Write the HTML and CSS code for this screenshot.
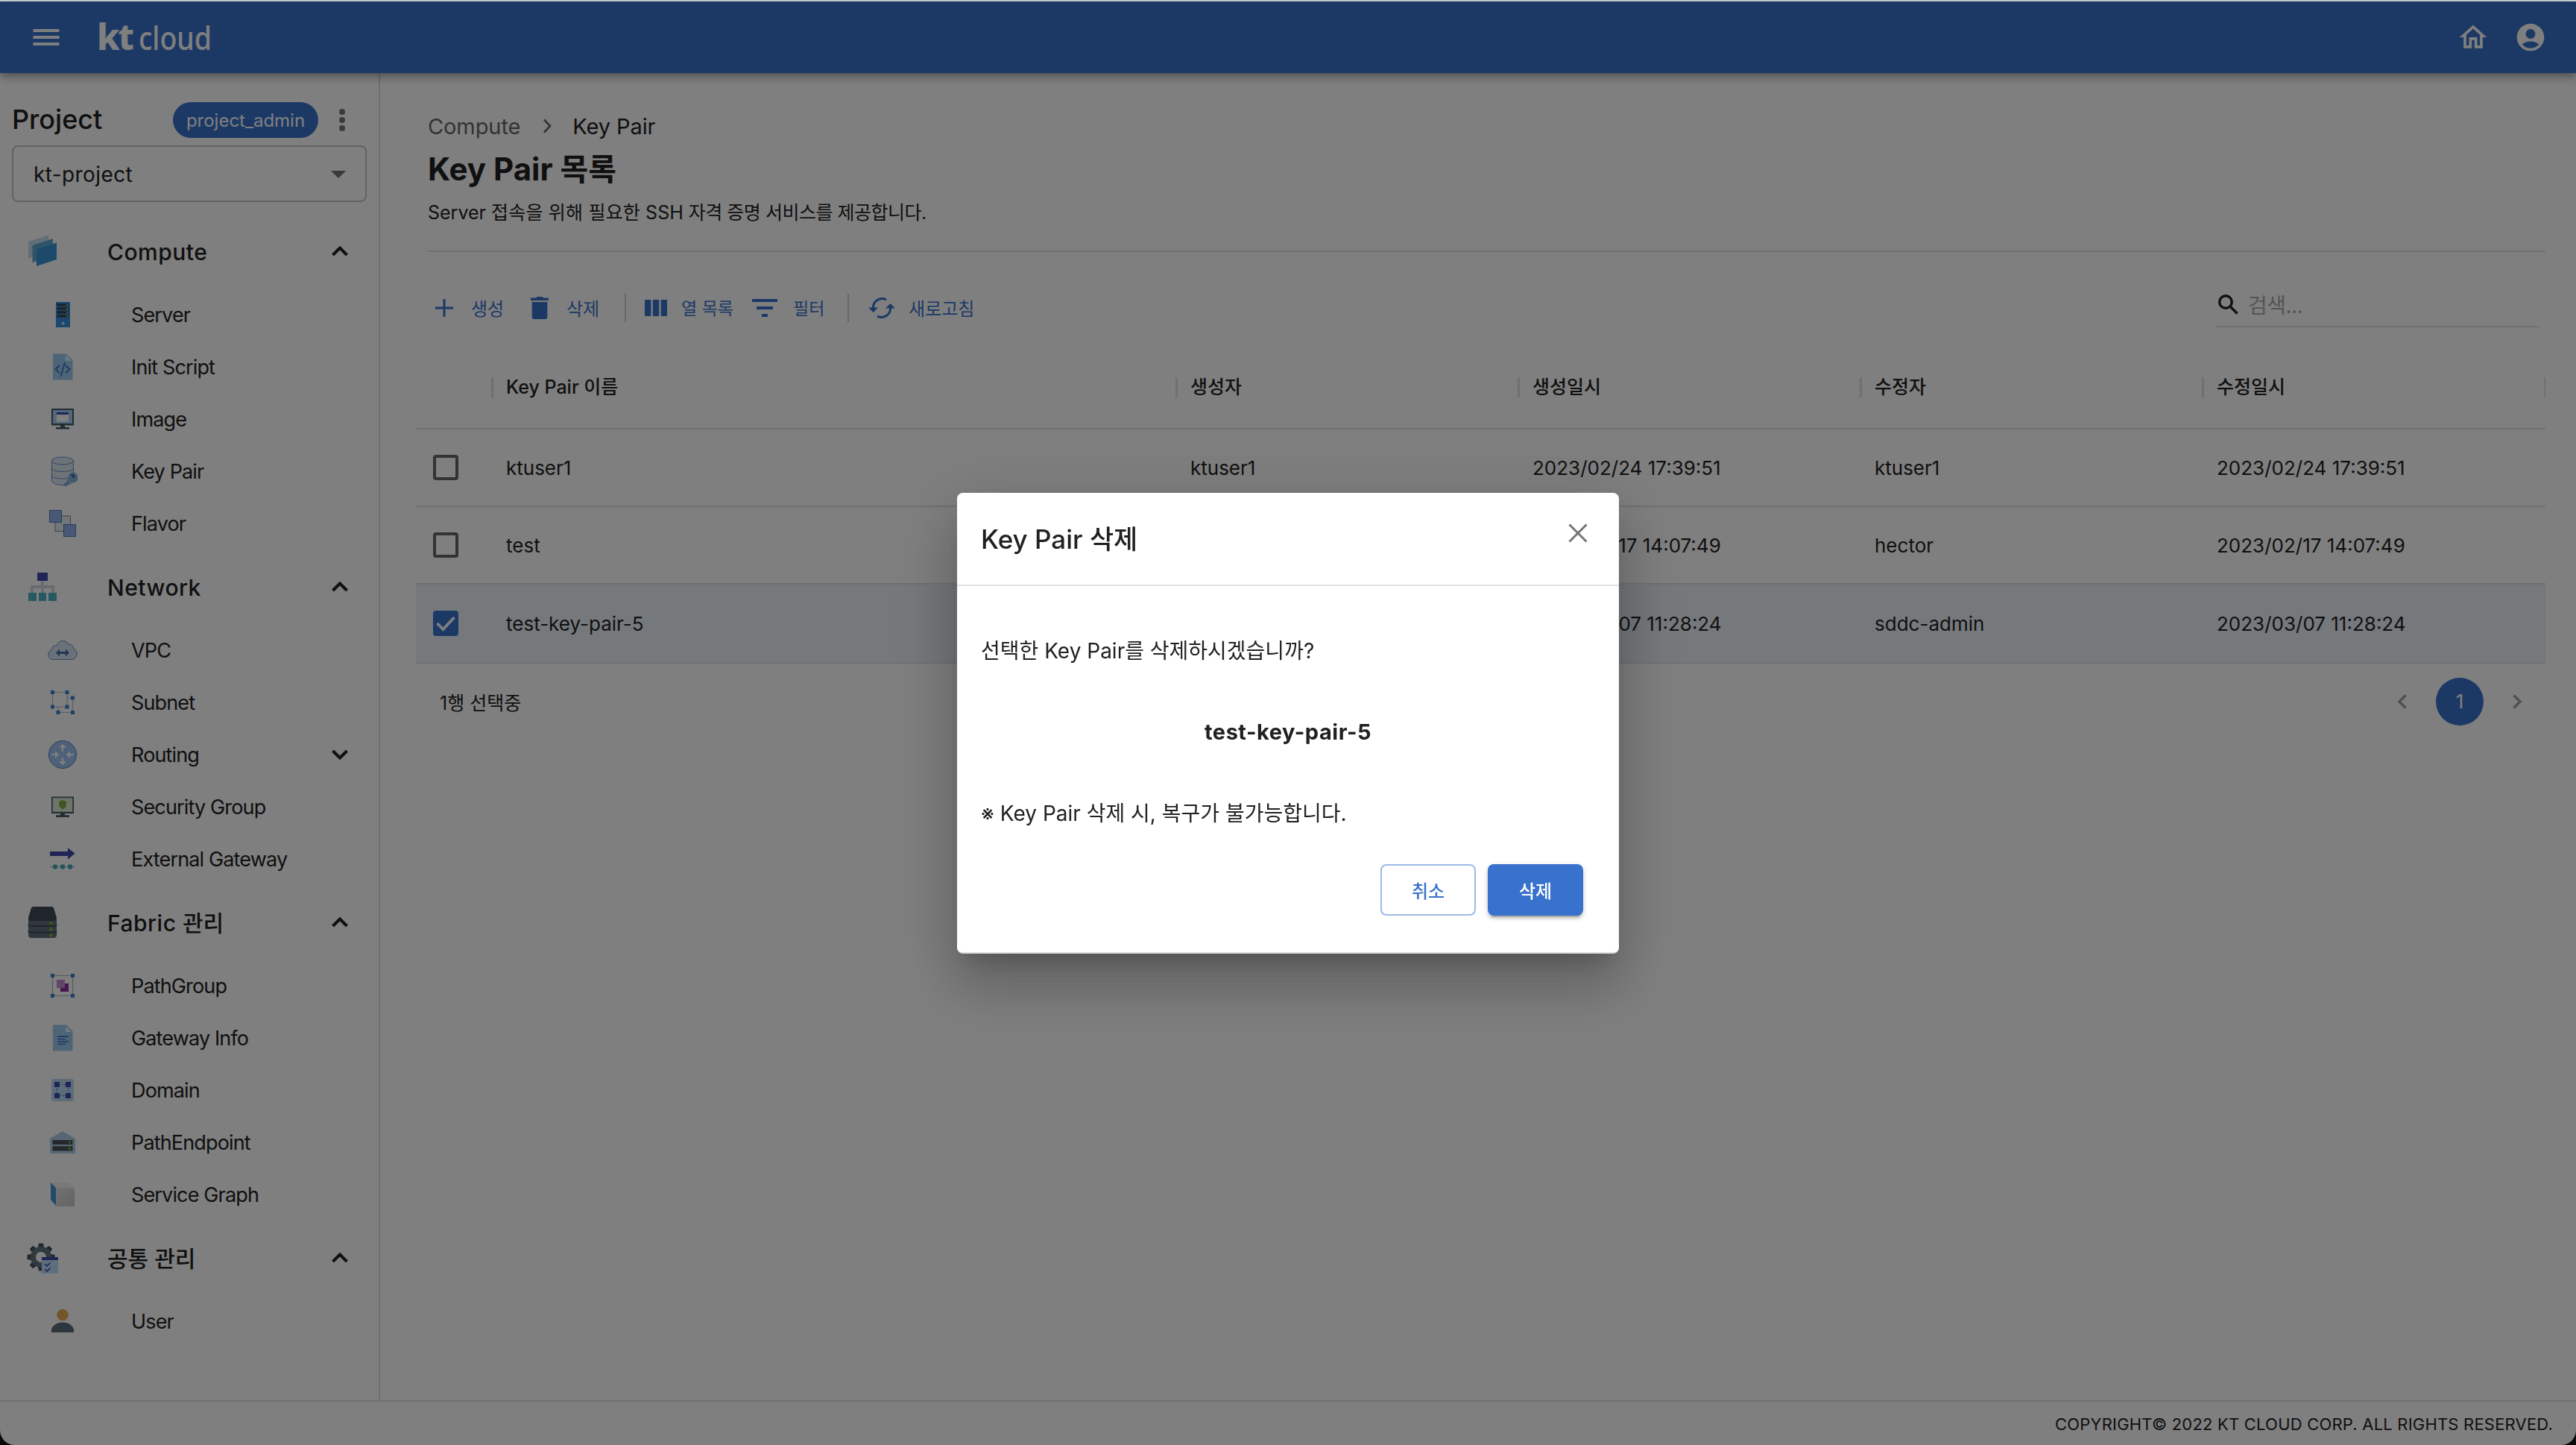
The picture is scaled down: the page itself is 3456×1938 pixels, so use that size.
FILE: index.html
```html
<!DOCTYPE html>
<html lang="ko">
<head>
<meta charset="utf-8">
<title>Key Pair 목록 - kt cloud</title>
<link rel="stylesheet" href="styles.css">
</head>
<body>
<div class="window">
  <div class="strip"></div>
  <header class="appbar">
    <svg class="menu-icon" viewBox="0 0 36 24"><path d="M0.5 1h35v4h-35zM0.5 10h35v4h-35zM0.5 19h35v4h-35z"/></svg>
    <div class="logo"><span class="logo-kt">kt</span><span class="logo-cloud">cloud</span></div>
    <div class="appbar-actions">
      <svg class="home-icon" viewBox="0 0 24 24"><path d="m12 5.69 5 4.5V18h-2v-6H9v6H7v-7.810l5-4.5M12 3 2 12h3v8h6v-6h2v6h6v-8h3L12 3z"/></svg>
      <svg class="account-icon" viewBox="0 0 24 24"><path d="M12 2C6.480 2 2 6.480 2 12s4.480 10 10 10 10-4.480 10-10S17.520 2 12 2zm0 4c1.930 0 3.500 1.570 3.500 3.500S13.930 13 12 13s-3.500-1.570-3.500-3.500S10.070 6 12 6zm0 14c-2.030 0-4.430-.82-6.140-2.880C7.550 15.800 9.680 15 12 15s4.450.8 6.140 2.120C16.430 19.180 14.030 20 12 20z"/></svg>
    </div>
  </header>

  <div class="body">
    <nav class="sidebar">
      <div class="project-row">
        <span class="project-label">Project</span>
        <span class="chip">project_admin</span>
        <svg class="dots" viewBox="0 0 10 32"><circle cx="5" cy="5" r="4"/><circle cx="5" cy="16" r="4"/><circle cx="5" cy="27" r="4"/></svg>
      </div>
      <div class="select"><span>kt-project</span><svg viewBox="0 0 20 10"><path d="M0 0h20L10 10z"/></svg></div>

      <div class="group">
        <svg class="group-icon" viewBox="0 0 44 44"><path fill="#a5d0e2" opacity=".7" d="M3 9 30 .5V23L3 32z"/><path fill="#5fa9cf" d="M8.500 14 36 5v23L8.500 37z"/><path fill="#3b92d4" d="M14 19.500 41 10.500V33L14 42z"/></svg>
        <span class="group-title">Compute</span>
        <svg class="chev" viewBox="0 0 24 16"><path d="M2.500 13 12 3.500 21.500 13"/></svg>
      </div>
      <div class="item"><svg class="item-icon" viewBox="0 0 40 40"><path fill="#3b8fe0" d="M11 3h19v34H11z"/><path fill="#37474f" d="M12.500 5.200h15.500v3.300H12.500zM12.500 10.200h15.500v3.300H12.500zM12.500 15.200h15.500v3.300H12.500zM12.500 20.200h15.500v3.300H12.500z"/><path fill="#8bc34a" d="M25 6h2v2h-2zM25 11h2v2h-2zM25 16h2v2h-2zM25 21h2v2h-2z"/><circle cx="20.600" cy="31.700" r="2" fill="#bbdefb"/></svg><span>Server</span></div>
      <div class="item"><svg class="item-icon" viewBox="0 0 40 40"><path fill="#9cc8ef" d="M7 2.500h18L33.500 11v26.500H7z"/><path fill="#e1f5fe" d="M24 4v8h8z"/><path fill="none" stroke="#2f6fc4" stroke-width="1.700" d="m16 18-5.500 5 5.500 5.500M23 14l-5.500 19M24 18l5.500 5-5.500 5.500"/></svg><span>Init Script</span></div>
      <div class="item"><svg class="item-icon" viewBox="0 0 40 40"><path fill="#455a64" d="M5 6h30v22.500H5zM17 28h6v4h-6zM11 31h18v2.600H11z"/><path fill="#a6d0fa" d="M7 8h26v18H7z"/><path fill="#fff" d="M12 11h16v12.500H12z"/><path fill="#3f47b0" d="M12 11h16v3H12z"/></svg><span>Image</span></div>
      <div class="item"><svg class="item-icon" viewBox="0 0 40 40"><g fill="#dde6ee" stroke="#5f8fc8"><path d="M5.500 6v26c0 4 6 6.500 14.500 6.500S34.500 36 34.500 32V6"/><ellipse cx="20" cy="6" rx="14.500" ry="5"/><path fill="none" d="M5.500 15.500c0 3.500 6.500 5 14.500 5s14.500-1.500 14.500-5M5.500 25c0 3.500 6.500 5 14.500 5 3 0 6 0 8-.6"/><path fill="#8db4e6" d="m28.800 31-6.300 6.200c-.6 2 1 3 2.700 2.300l1-2.300 2-.6.400-2 2.200-1.200a6 6 0 1 0-2-2.400z"/></g><ellipse cx="34" cy="26.500" rx="2" ry="3.200" fill="#3f6cae" transform="rotate(-40 34 26.500)"/></svg><span>Key Pair</span></div>
      <div class="item"><svg class="item-icon" viewBox="0 0 40 40"><path fill="#e3edf2" stroke="#7b8690" d="M10 10h20.500v20.500H10z"/><path fill="#90b0ea" stroke="#5074b8" d="M2.500 2.500h16v16h-16zM21.500 21.500h16v16h-16z"/></svg><span>Flavor</span></div>

      <div class="group">
        <svg class="group-icon" viewBox="0 0 44 44"><path fill="#cfd8dc" d="M20 14h4v6h14v10h-4v-6H24v6h-4v-6H10v6H6V20h14z"/><path fill="#4048ac" d="M15 3h14v11H15z"/><path fill="#4fb3c8" d="M3 30h11v11H3zM17 30h10v11H17zM30 30h11v11H30z"/></svg>
        <span class="group-title">Network</span>
        <svg class="chev" viewBox="0 0 24 16"><path d="M2.500 13 12 3.500 21.500 13"/></svg>
      </div>
      <div class="item"><svg class="item-icon" viewBox="0 0 40 40"><path fill="#d5e3f5" stroke="#5f8fc8" d="M7 32.500a6.500 6.500 0 0 1-2-12.500c0-4 3-6.500 7-6 1.500-4 4.500-6.500 8-6.500s6.500 1.500 7.500 4.500c5 0 7.500 3 7.500 6.500a7.500 7.500 0 0 1-2 14z"/><path fill="#456da8" d="m11 23.500 5-5v3.500h8v-3.500l5 5-5 5V25h-8v3.500z"/></svg><span>VPC</span></div>
      <div class="item"><svg class="item-icon" viewBox="0 0 40 40"><path fill="none" stroke="#b0bec5" stroke-width="1.200" d="M6.500 6.500H26V26H6.500zM26 14h7.500v19.500H14V26"/><path fill="#3b82d0" d="M4 4h5v5H4zM23.500 4h5v5h-5zM31 11.500h5v5h-5zM4 23.500h5v5H4zM23.500 23.500h5v5h-5zM11.500 31h5v5h-5zM31 31h5v5h-5z"/></svg><span>Subnet</span></div>
      <div class="item"><svg class="item-icon" viewBox="0 0 40 40"><circle cx="20" cy="20" r="18.500" fill="#9dc3f2" stroke="#4f80c8"/><path fill="#fff" d="m20 6 5 5h-4v5h-2v-5h-4zM20 34l5-5h-4v-5h-2v5h-4zM15 20l-5-5v4H5v2h5v4zM25 20l5-5v4h5v2h-5v4z"/></svg><span>Routing</span><svg class="chev" viewBox="0 0 24 16"><path d="M2.500 3 12 12.500 21.500 3"/></svg></div>
      <div class="item"><svg class="item-icon" viewBox="0 0 40 40"><path fill="#455a64" d="M5 6.500h30V29H5zM17 29h6v3h-6zM11 31.200h18V34H11z"/><path fill="#dfe8d5" d="M6.700 8.200h26.600v18.600H6.700z"/><path fill="#80b040" d="m20 11 5 2v4c0 3-2 5-5 6.500-3-1.500-5-3.500-5-6.500v-4z"/></svg><span>Security Group</span></div>
      <div class="item"><svg class="item-icon" viewBox="0 0 40 40"><path fill="#4048ac" d="M3 10h24V5l9.500 7.700L27 20.500V16H3z"/><path stroke="#b0bec5" stroke-width="1.200" d="M3 30.500h34"/><g fill="#4aa8ba"><circle cx="10" cy="30.500" r="3.300"/><circle cx="20" cy="30.500" r="3.300"/><circle cx="30" cy="30.500" r="3.300"/></g></svg><span>External Gateway</span></div>

      <div class="group">
        <svg class="group-icon" viewBox="0 0 44 44"><path fill="#62717b" d="M3 18h38v21a4 4 0 0 1-4 4H7a4 4 0 0 1-4-4z"/><path fill="#3e4a54" d="M10 1h24q3 0 3.500 3L41 16q0 4-3 4H6q-3 0-3-4L6.500 4Q7 1 10 1z"/><path fill="none" stroke="#3e4a54" stroke-width="2" d="M3 25q1 2 3 2h32q2 0 3-2M3 33.500q1 2 3 2h32q2 0 3-2"/><g fill="#76b233"><circle cx="33.500" cy="23" r="2.200"/><circle cx="33.500" cy="31.300" r="2.200"/><circle cx="33.500" cy="39.700" r="2.200"/></g></svg>
        <span class="group-title">Fabric <span class="ko">관리</span></span>
        <svg class="chev" viewBox="0 0 24 16"><path d="M2.500 13 12 3.500 21.500 13"/></svg>
      </div>
      <div class="item"><svg class="item-icon" viewBox="0 0 40 40"><path fill="none" stroke="#a3b2b8" stroke-width="1.200" d="M6.500 6.500h27v27h-27z"/><path fill="#3b82d0" d="M4 4h5v5H4zM31 4h5v5h-5zM4 31h5v5H4zM31 31h5v5h-5z"/><path fill="#8a2a9c" d="M17 17h11v11H17z"/><path fill="#c08fd2" d="M12 12h11v11H12z"/></svg><span>PathGroup</span></div>
      <div class="item"><svg class="item-icon" viewBox="0 0 40 40"><path fill="#9cc8ef" d="M7 2.500h18L33.500 11v26.500H7z"/><path fill="#e1f5fe" d="M24 4v8h8z"/><path fill="none" stroke="#2f6fc4" stroke-width="1.400" d="M13 18.300h15M13 21.600h11M13 25h15M13 28.400h11"/></svg><span>Gateway Info</span></div>
      <div class="item"><svg class="item-icon" viewBox="0 0 40 40"><rect x="5" y="5" width="30" height="30" rx="3" fill="#bbd9f2"/><path fill="none" stroke="#3b82d0" stroke-width="1.200" stroke-dasharray="4 1.500 1.500 1.500" d="M12.500 12.500h15v15h-15z"/><path fill="#4048ac" d="M9 9h7v7H9zM24 9h7v7h-7zM9 24h7v7H9zM24 24h7v7h-7z"/></svg><span>Domain</span></div>
      <div class="item"><svg class="item-icon" viewBox="0 0 40 40"><path fill="#b0cde8" d="M3 15 20 5l17 10v20H3z"/><path fill="#455058" d="M6.500 17h27v6h-27zM6.500 25.300h27v6.200h-27z"/><circle cx="29.300" cy="20" r="1.800" fill="#76b233"/><circle cx="29.300" cy="28.400" r="1.800" fill="#76b233"/></svg><span>PathEndpoint</span></div>
      <div class="item"><svg class="item-icon" viewBox="0 0 40 40"><defs><linearGradient id="cube" x1="0" y1="0" x2="1" y2="1"><stop offset="0" stop-color="#e4e4e6"/><stop offset="1" stop-color="#c8c8cc"/></linearGradient></defs><path fill="#f0f0f0" d="M4 4h24l8 7H11z"/><path fill="#4296d0" d="m4 4 7 7v24l-7-8z"/><path fill="url(#cube)" d="M11 11h25v25H11z"/></svg><span>Service Graph</span></div>

      <div class="group">
        <svg class="group-icon" viewBox="0 0 44 44"><g fill="#46545e"><path id="tooth" d="M17 2.500h6l1.500 7h-9zM17 39.500h6l1.500-7h-9z"/><use href="#tooth" transform="rotate(45 20 21)"/><use href="#tooth" transform="rotate(90 20 21)"/><use href="#tooth" transform="rotate(135 20 21)"/></g><circle cx="20" cy="21" r="10.500" fill="none" stroke="#607580" stroke-width="7"/><path fill="#bbdefb" d="M21 21h22v22H21z"/><path fill="#4048ac" d="M21 21h22v4H21z"/><path fill="none" stroke="#4048ac" stroke-width="1.700" d="m25 30 3 3 4.500-4.500M25 37l3 3 4.500-4.500"/></svg>
        <span class="group-title ko">공통 관리</span>
        <svg class="chev" viewBox="0 0 24 16"><path d="M2.500 13 12 3.500 21.500 13"/></svg>
      </div>
      <div class="item"><svg class="item-icon" viewBox="0 0 40 40"><circle cx="20" cy="11.500" r="7.800" fill="#e8ac58"/><path fill="#5a6d78" d="M5 35v-4c1-5 7.500-9.500 15-9.500S34 26 35 31v4z"/></svg><span>User</span></div>
    </nav>

    <main class="main">
      <div class="breadcrumb"><span class="crumb-parent">Compute</span><svg viewBox="0 0 12 20"><path d="M2 1.500 10 10l-8 8.500"/></svg><span>Key Pair</span></div>
      <h1 class="title">Key Pair <span class="ko">목록</span></h1>
      <p class="desc">Server <span class="desc-a">접속을 위해 필요한</span> SSH <span class="desc-b">자격 증명 서비스를 제공합니다.</span></p>
      <div class="grid">
        <div class="toolbar">
          <div class="tool t-add"><svg viewBox="0 0 24 24"><path d="M10.500 0h3v10.500H24v3H13.500V24h-3V13.500H0v-3h10.500z"/></svg><span>생성</span></div>
          <div class="tool t-del"><svg viewBox="0 0 24 30"><path d="M7 1.500 8.500 0h7L17 1.500h7V5H0V1.500zM1.700 7h20.600v20a3 3 0 0 1-3 3H4.700a3 3 0 0 1-3-3z"/></svg><span>삭제</span></div>
          <i class="bar"></i>
          <div class="tool t-cols"><svg viewBox="0 0 30 22"><rect width="8.400" height="22" rx="1.200"/><rect x="10.800" width="8.400" height="22" rx="1.200"/><rect x="21.600" width="8.400" height="22" rx="1.200"/></svg><span>열 목록</span></div>
          <div class="tool t-filter"><svg viewBox="0 0 34 24"><path d="M0 0h34v4H0zM6 10h22v4H6zM13 20h8v4h-8z"/></svg><span>필터</span></div>
          <i class="bar"></i>
          <div class="tool t-refresh"><svg viewBox="0 0 36 28"><path fill="none" stroke="currentColor" stroke-width="3" d="M24 3A12 12 0 0 0 6.500 15M12 25A12 12 0 0 0 29.500 13"/><path d="M0 13.500h13L6.500 20zM36 14.500H23L29.500 8z"/></svg><span>새로고침</span></div>
          <div class="search"><svg viewBox="0 0 27 27"><circle cx="10" cy="10" r="8.300"/><path d="m16 16 9.500 9.500"/></svg><span>검색...</span></div>
        </div>
        <div class="row head"><span class="c0"></span><span class="c1">Key Pair <span class="ko">이름</span></span><span class="c ko">생성자</span><span class="c ko">생성일시</span><span class="c ko">수정자</span><span class="c ko">수정일시</span><span class="end"></span></div>
        <div class="row"><span class="c0"><i class="box"></i></span><span class="c1">ktuser1</span><span class="c">ktuser1</span><span class="c">2023/02/24 17:39:51</span><span class="c">ktuser1</span><span class="c">2023/02/24 17:39:51</span></div>
        <div class="row"><span class="c0"><i class="box"></i></span><span class="c1">test</span><span class="c">hector</span><span class="c">2023/02/17 14:07:49</span><span class="c">hector</span><span class="c">2023/02/17 14:07:49</span></div>
        <div class="row selected"><span class="c0"><i class="box checked"><svg viewBox="0 0 34 34"><path d="m5.500 17 8 8 15-16"/></svg></i></span><span class="c1">test-key-pair-5</span><span class="c">sddc-admin</span><span class="c">2023/03/07 11:28:24</span><span class="c">sddc-admin</span><span class="c">2023/03/07 11:28:24</span></div>
        <div class="grid-foot"><span class="count">1<span class="ko">행 선택중</span></span>
          <div class="pager"><svg viewBox="0 0 14 20"><path d="M11.500 1.500 3 10l8.500 8.500"/></svg><span class="page">1</span><svg viewBox="0 0 14 20"><path d="M2.500 1.500 11 10l-8.500 8.500"/></svg></div>
        </div>
      </div>
    </main>
  </div>
  <footer class="footer">COPYRIGHT© 2022 KT CLOUD CORP. ALL RIGHTS RESERVED.</footer>
</div>

<div class="backdrop">
  <section class="dialog">
    <div class="dialog-head"><h2>Key Pair <span class="ko">삭제</span></h2><svg viewBox="0 0 26 26"><path d="m1.500 1.500 23 23m0-23-23 23"/></svg></div>
    <div class="dialog-body">
      <p>선택한 Key Pair를 삭제하시겠습니까?</p>
      <p class="target">test-key-pair-5</p>
      <p>※ Key Pair 삭제 시, 복구가 불가능합니다.</p>
    </div>
    <div class="dialog-actions"><button class="btn outlined">취소</button><button class="btn filled">삭제</button></div>
  </section>
</div>
</body>
</html>
```
FILE: styles.css
```css
* { box-sizing: border-box; }
body {
  margin: 0;
  background: #111;
  color: #212121;
  font-family: Inter, "Noto Sans CJK KR", sans-serif;
  font-size: 28px;
}
svg { display: block; flex: none; }
h1, h2, p { margin: 0; }

.window {
  width: 3456px;
  height: 1938px;
  display: grid;
  grid-template-rows: 2px 96px 1780px 60px;
  background: #fff;
  border-radius: 0 0 20px 20px;
  overflow: hidden;
}
.strip { background: #cdd0d4; }

.appbar {
  display: flex;
  align-items: center;
  padding: 0 40px 0 44px;
  background: #3872cd;
  color: #fff;
  z-index: 1;
  box-shadow: 0 4px 8px -2px rgba(0,0,0,.2), 0 8px 10px rgba(0,0,0,.14), 0 2px 20px rgba(0,0,0,.12);
}
.appbar svg { fill: #fff; }
.menu-icon { width: 36px; height: 24px; }
.logo { display: flex; align-items: baseline; margin-left: 50px; line-height: 60px; }
.logo-kt { font: 800 48px/60px "Noto Sans", sans-serif; letter-spacing: -2px; width: 56px; }
.logo-cloud { font: 500 43px/60px "Noto Sans", sans-serif; transform: scaleX(.87); transform-origin: 0 50%; }
.appbar-actions { margin-left: auto; display: flex; align-items: center; gap: 33px; }
.home-icon, .account-icon { width: 44px; height: 44px; }

.body { display: flex; min-height: 0; }
.sidebar { width: 510px; flex: none; border-right: 2px solid #e0e0e0; padding-top: 38px; }
.project-row { display: flex; align-items: center; height: 52px; padding: 0 0 3px 16px; }
.project-label { font-size: 36px; font-weight: 500; line-height: 48px; width: 216px; padding-bottom: 2px; }
.chip { width: 195px; height: 48px; border-radius: 24px; background: #3872cd; color: #fff; font-size: 24px; line-height: 50px; text-align: center; }
.dots { width: 10px; height: 32px; margin-left: 27px; fill: #757575; }
.select { margin: 7px 0 0 16px; width: 476px; height: 76px; border: 2px solid #c4c4c4; border-radius: 8px; display: flex; align-items: center; justify-content: space-between; padding: 1px 26px 0 27px; font-size: 28px; letter-spacing: .4px; }
.select svg { width: 20px; height: 10px; fill: #757575; }
.select + .group { margin-top: 16px; }
.group { display: flex; align-items: center; height: 100px; padding-left: 35px; }
.group-icon { width: 44px; height: 44px; }
.group-title { margin-left: 65px; font-size: 30px; font-weight: 500; padding-top: 2px; line-height: 40px; letter-spacing: .5px; }
.group-title.ko, .group-title .ko { letter-spacing: 0; }
.chev { width: 24px; height: 16px; margin: 0 40px 0 auto; fill: none; stroke: #212121; stroke-width: 4; }
.item { display: flex; align-items: center; height: 70px; padding-left: 64px; font-size: 27px; letter-spacing: -.85px; }
.item-icon { width: 40px; height: 40px; margin-right: 72px; }

.main { flex: 1; padding: 50px 42px 0 64px; display: flex; flex-direction: column; }
.breadcrumb { display: flex; align-items: center; height: 42px; font-size: 29px; letter-spacing: -.1px; }
.breadcrumb svg { width: 12px; height: 20px; fill: none; stroke: #666; stroke-width: 2.6; margin: 0 28px 0 30px; }
.crumb-parent { color: #666; }
.title { font-size: 42px; font-weight: 700; line-height: 60px; margin-top: 7px; }
.title .ko { font-size: 41px; }
.desc { font-size: 25px; line-height: 40px; margin-top: 8px; }
.desc-a { letter-spacing: .2px; }
.desc-b { letter-spacing: -.5px; }
.grid { border-top: 2px solid #e0e0e0; margin-top: 31px; }

.toolbar { display: flex; align-items: center; height: 150px; color: #3872cd; font-size: 24px; padding: 0 8px 0 10px; }
.tool { display: flex; align-items: center; white-space: nowrap; }
.tool span { padding-bottom: 2px; }
.tool svg { fill: currentColor; }
.bar { width: 2px; height: 38px; background: #d0d0d0; }
.t-add svg { width: 24px; height: 24px; margin-right: 24px; }
.t-add { width: 128px; }
.t-del svg { width: 24px; height: 30px; margin-right: 24px; }
.t-del { width: 126px; }
.t-cols svg { width: 30px; height: 22px; margin-right: 19px; }
.t-cols { margin-left: 25px; width: 144px; font-size: 23px; }
.t-filter svg { width: 34px; height: 24px; margin-right: 21px; }
.t-filter { width: 128px; font-size: 23px; }
.t-refresh { margin-left: 26px; }
.t-refresh svg { width: 36px; height: 28px; margin-right: 18px; }
.search { margin: 0 0 8px auto; width: 435px; height: 60px; border-bottom: 2px solid #e0e0e0; display: flex; align-items: center; padding: 0 4px; color: #a8a8a8; font-size: 28px; letter-spacing: -.5px; }
.search svg { width: 27px; height: 27px; margin-right: 13px; fill: none; stroke: #212121; stroke-width: 3.400; }

.row { display: flex; align-items: center; height: 104px; border-bottom: 2px solid #e0e0e0; margin-left: -16px; font-size: 26px; }
.row.head { height: 88px; padding-bottom: 24px; font-size: 25px; font-weight: 500; }
.row.selected { height: 106px; background: #ebf2f9; }
.c0 { width: 101px; padding-left: 23px; }
.c1 { width: 918px; padding-left: 20px; }
.c { width: 459px; padding-left: 20px; }
.head .c1, .head .c, .head .end { border-left: 3px solid #e0e0e0; line-height: 27px; height: 27px; padding-left: 17px; }
.head .end { margin-left: auto; width: 2px; padding: 0; border-width: 2px; }
.box { display: block; width: 34px; height: 34px; border: 4px solid #666; border-radius: 4px; }
.box.checked { border: 0; background: #3872cd; }
.box svg { fill: none; stroke: #fff; stroke-width: 3.800; }
.grid-foot { display: flex; align-items: center; justify-content: space-between; height: 102px; padding: 0 31px 0 16px; }
.count { font-size: 25px; }
.pager { display: flex; align-items: center; }
.pager svg { width: 14px; height: 20px; fill: none; stroke: #a0a0a0; stroke-width: 3.400; }
.page { width: 64px; height: 64px; margin: 0 38px; border-radius: 50%; background: #3872cd; color: #fff; text-align: center; line-height: 64px; font-size: 26px; }

.footer { border-top: 2px solid #e0e0e0; display: flex; align-items: center; justify-content: flex-end; padding: 2px 32px 0 0; font-size: 22px; letter-spacing: .2px; }

.backdrop { position: fixed; inset: 2px 0 0; z-index: 2; background: rgba(0,0,0,.5); display: flex; align-items: center; justify-content: center; }
.dialog {
  width: 888px; height: 618px; background: #fff; border-radius: 8px; border-bottom: 2px solid #e0e0e0;
  box-shadow: 0 22px 30px -14px rgba(0,0,0,.2), 0 48px 76px 6px rgba(0,0,0,.14), 0 18px 92px 16px rgba(0,0,0,.12);
}
.dialog-head { display: flex; justify-content: space-between; height: 125px; border-bottom: 2px solid #e0e0e0; padding: 41px 42px 0 32px; }
.dialog-head h2 { font-size: 35px; font-weight: 500; line-height: 42px; }
.dialog-head svg { width: 26px; height: 26px; fill: none; stroke: #757575; stroke-width: 3; }
.dialog-body { padding: 65px 32px 0; line-height: 44px; font-size: 28px; }
.dialog-body p + p { margin-top: 65px; }
.dialog-body .target { text-align: center; font-weight: 700; font-size: 29px; letter-spacing: .5px; }
.dialog-actions { display: flex; justify-content: flex-end; gap: 16px; padding: 46px 48px 0; }
.btn { width: 128px; height: 69px; border-radius: 8px; font: 500 24px Inter, "Noto Sans CJK KR", sans-serif; padding: 0; }
.outlined { background: #fff; color: #3872cd; border: 2px solid #9bb9e6; }
.filled { background: #3872cd; color: #fff; border: 0; box-shadow: 0 6px 2px -4px rgba(0,0,0,.2), 0 4px 4px rgba(0,0,0,.14), 0 2px 10px rgba(0,0,0,.12); }
```
